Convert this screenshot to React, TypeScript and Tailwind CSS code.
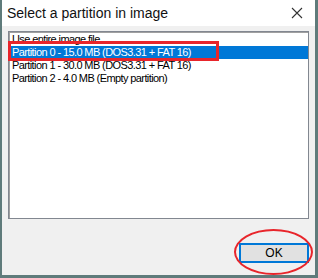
export default function App() {
  return (
    <div className="w-[318px] h-[278px] bg-[#f0f0f0] border-l-2 border-r-[3px] border-b-[3px] border-[#5f7b7b] flex flex-col relative overflow-hidden" style={{ fontFamily: '"Liberation Sans", Arial, sans-serif' }}>
      {/* Title bar */}
      <div className="h-[26px] bg-white flex items-center justify-between pl-[5px] pr-[8px] shrink-0">
        <span className="text-[14px] text-[#111]">Select a partition in image</span>
        <svg width="12" height="12" viewBox="0 0 12 12" className="mr-[4px]">
          <path d="M1 1 L11 11 M11 1 L1 11" stroke="#333" strokeWidth="1.1" />
        </svg>
      </div>

      {/* List */}
      <div className="mx-[6px] mt-[5px] h-[188px] bg-white border border-[#828790] shadow-[inset_1px_1px_0_#a0a0a0] pt-[1px] text-[11px] tracking-[-0.6px] leading-[13px] text-black">
        <div className="px-[3px]">Use entire image file</div>
        <div className="px-[3px] bg-[#0078d7] text-white">Partition 0 - 15.0 MB (DOS3.31 + FAT 16)</div>
        <div className="px-[3px]">Partition 1 - 30.0 MB (DOS3.31 + FAT 16)</div>
        <div className="px-[3px]">Partition 2 - 4.0 MB (Empty partition)</div>
      </div>

      {/* Footer */}
      <div className="flex justify-end mt-[24px] mr-[6px]">
        <button className="w-[70px] h-[20px] bg-[#e1e1e1] border-2 border-[#0078d7] text-[12px] text-black leading-none">OK</button>
      </div>

      {/* annotations */}
      <div className="absolute left-[6px] top-[41px] w-[211px] h-[20px] border-[3px] border-[#e8252b]" />
      <div className="absolute left-[232px] top-[229px] w-[79px] h-[46px] border-2 border-[#e8252b] rounded-[50%]" />
    </div>
  );
}
